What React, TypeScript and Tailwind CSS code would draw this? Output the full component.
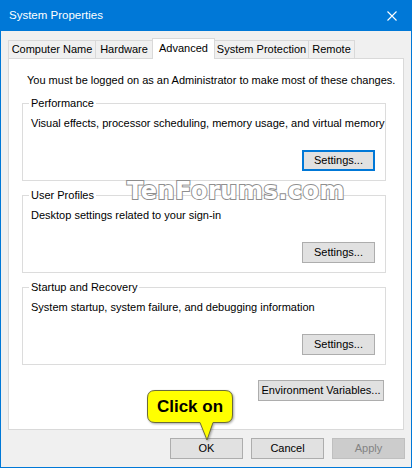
import React from "react";

const font = { fontFamily: '"Liberation Sans", Arial, sans-serif' };

function Btn({ children, focused, disabled, w = "w-[73px]" }: { children: React.ReactNode; focused?: boolean; disabled?: boolean; w?: string }) {
  const base = "h-[21px] flex items-center justify-center text-[11px] leading-none whitespace-nowrap";
  if (disabled)
    return <div className={`${base} ${w} border border-[#bfbfbf] bg-[#cccccc] text-[#838383]`}>{children}</div>;
  if (focused)
    return <div className={`${base} ${w} border-2 border-[#0078d7] bg-[#e1e1e1] text-black`}>{children}</div>;
  return <div className={`${base} ${w} border border-[#adadad] bg-[#e1e1e1] text-black`}>{children}</div>;
}

function Group({ title, desc, focused }: { title: string; desc: string; focused?: boolean }) {
  return (
    <fieldset className="ml-[13px] mr-[17px] min-w-0 h-[86px] border border-[#dcdcdc]">
      <legend className="ml-[6px] px-[2px] text-[11px] leading-[16px] text-black whitespace-nowrap">{title}</legend>
      <div className="pl-[8px] mt-[4px] text-[11px] leading-[16px] text-black whitespace-nowrap">{desc}</div>
      <div className="flex justify-end pr-[10px] mt-[19px]">
        <Btn focused={focused}>Settings...</Btn>
      </div>
    </fieldset>
  );
}

export default function App() {
  const tabs = [
    { t: "Computer Name", w: "w-[88px]" },
    { t: "Hardware", w: "w-[58px]" },
    { t: "Advanced", w: "w-[63px]", active: true },
    { t: "System Protection", w: "w-[95px]" },
    { t: "Remote", w: "w-[47px]" },
  ];
  return (
    <div style={font} className="relative w-[412px] h-[468px] border border-[#0078d7] bg-[#f0f0f0] flex flex-col overflow-hidden">
      {/* Title bar */}
      <div className="h-[30px] bg-[#0078d7] flex items-center justify-between pl-[8px] pr-[10px] shrink-0">
        <span className="text-white text-[11.5px] leading-none whitespace-nowrap">System Properties</span>
        <svg width="10" height="10" viewBox="0 0 10 10" className="mr-[4px]">
          <path d="M0.5 0.5 L9.5 9.5 M9.5 0.5 L0.5 9.5" stroke="white" strokeWidth="1.1" />
        </svg>
      </div>
      {/* Tabs */}
      <div className="h-[27px] flex items-end pl-[7px] shrink-0">
        {tabs.map((tab) =>
          tab.active ? (
            <div key={tab.t} className={`${tab.w} h-[21px] -mb-px -ml-px z-10 bg-white border border-b-0 border-[#d9d9d9] flex items-center justify-center pb-[2px] text-[11px] text-black whitespace-nowrap`}>
              {tab.t}
            </div>
          ) : (
            <div key={tab.t} className={`${tab.w} h-[18px] bg-[#f0f0f0] border border-b-0 border-[#d9d9d9] -ml-px first:ml-0 flex items-center justify-center text-[11px] text-black whitespace-nowrap`}>
              {tab.t}
            </div>
          )
        )}
      </div>
      {/* Panel */}
      <div className="ml-[7px] w-[396px] h-[372px] border border-[#d9d9d9] bg-white flex flex-col shrink-0">
        <div className="mt-[13px] pl-[18px] text-[11px] leading-[16px] text-black whitespace-nowrap">
          You must be logged on as an Administrator to make most of these changes.
        </div>
        <div className="mt-[7px] flex flex-col gap-[6px]">
          <Group title="Performance" desc="Visual effects, processor scheduling, memory usage, and virtual memory" focused />
          <Group title="User Profiles" desc="Desktop settings related to your sign-in" />
          <Group title="Startup and Recovery" desc="System startup, system failure, and debugging information" />
        </div>
        <div className="mt-[15px] flex justify-end pr-[19px]">
          <Btn w="w-[126px]">Environment Variables...</Btn>
        </div>
      </div>
      {/* Bottom buttons */}
      <div className="mt-[8px] flex justify-end gap-[8px] pr-[6px]">
        <Btn>OK</Btn>
        <Btn>Cancel</Btn>
        <Btn disabled>Apply</Btn>
      </div>

      {/* Watermark */}
      <div
        className="absolute left-[126px] top-[178px] text-[24px] font-bold leading-none text-white tracking-[0.5px] [-webkit-text-stroke:2px_#8f8f8f] [paint-order:stroke_fill] whitespace-nowrap"
        style={{ fontFamily: '"DejaVu Sans", sans-serif' }}
      >
        TenForums.com
      </div>

      {/* Callout */}
      <div className="absolute left-[143px] top-[387px] w-[94px] h-[56px]">
        <svg width="94" height="56" viewBox="0 0 94 56" className="absolute inset-0 drop-shadow-[1px_1px_1px_rgba(0,0,0,0.35)]">
          <path
            d="M11 2.5 H81 Q88.5 2.5 88.5 10 V27 Q88.5 34.5 81 34.5 H69 L63 52 L56 34.5 H11 Q3.5 34.5 3.5 27 V10 Q3.5 2.5 11 2.5 Z"
            fill="#ffff00"
            stroke="#6b6b3a"
            strokeWidth="1"
          />
        </svg>
        <div className="absolute left-[3px] top-[3px] w-[86px] h-[31px] flex items-center justify-center text-[17px] font-bold text-black whitespace-nowrap">
          Click on
        </div>
      </div>
    </div>
  );
}
